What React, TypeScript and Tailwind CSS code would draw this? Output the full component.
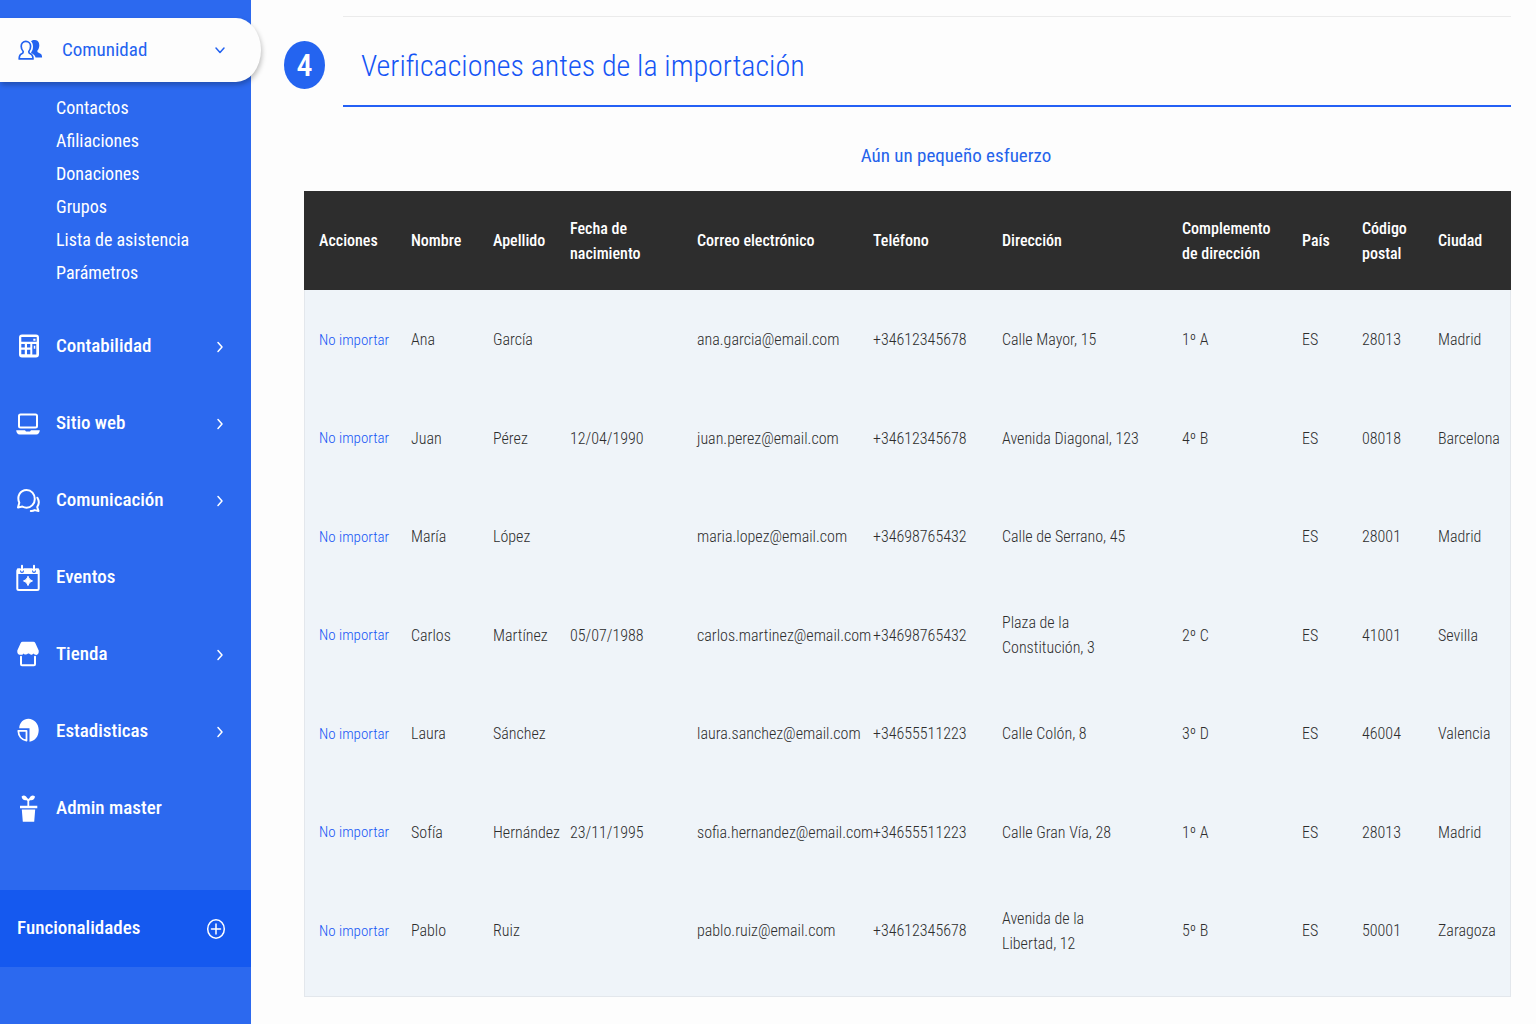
import { useState } from "react"
import type { ReactNode } from "react"

const subItems = [
  "Contactos",
  "Afiliaciones",
  "Donaciones",
  "Grupos",
  "Lista de asistencia",
  "Parámetros",
]

const columns = [
  { label: "Acciones", width: "w-[99px]" },
  { label: "Nombre", width: "w-[82px]" },
  { label: "Apellido", width: "w-[77px]" },
  { label: "Fecha de nacimiento", width: "w-[127px]" },
  { label: "Correo electrónico", width: "w-[176px]" },
  { label: "Teléfono", width: "w-[129px]" },
  { label: "Dirección", width: "w-[180px]" },
  { label: "Complemento de dirección", width: "w-[120px]" },
  { label: "País", width: "w-[60px]" },
  { label: "Código postal", width: "w-[76px]" },
  { label: "Ciudad", width: "w-[81px]" },
]

const contacts = [
  ["Ana", "García", "", "ana.garcia@email.com", "+34612345678", "Calle Mayor, 15", "1º A", "ES", "28013", "Madrid"],
  ["Juan", "Pérez", "12/04/1990", "juan.perez@email.com", "+34612345678", "Avenida Diagonal, 123", "4º B", "ES", "08018", "Barcelona"],
  ["María", "López", "", "maria.lopez@email.com", "+34698765432", "Calle de Serrano, 45", "", "ES", "28001", "Madrid"],
  ["Carlos", "Martínez", "05/07/1988", "carlos.martinez@email.com", "+34698765432", "Plaza de la Constitución, 3", "2º C", "ES", "41001", "Sevilla"],
  ["Laura", "Sánchez", "", "laura.sanchez@email.com", "+34655511223", "Calle Colón, 8", "3º D", "ES", "46004", "Valencia"],
  ["Sofía", "Hernández", "23/11/1995", "sofia.hernandez@email.com", "+34655511223", "Calle Gran Vía, 28", "1º A", "ES", "28013", "Madrid"],
  ["Pablo", "Ruiz", "", "pablo.ruiz@email.com", "+34612345678", "Avenida de la Libertad, 12", "5º B", "ES", "50001", "Zaragoza"],
]

function Icon({ children }: { children: ReactNode }) {
  return (
    <svg viewBox="0 0 28 28" className="size-7 shrink-0" fill="currentColor" aria-hidden="true">
      {children}
    </svg>
  )
}

const line = {
  fill: "none",
  stroke: "currentColor",
  strokeWidth: 2,
  strokeLinejoin: "round",
  strokeLinecap: "round",
} as const

function PeopleIcon() {
  return (
    <Icon>
      <path d="M15 5.200c1-.9 2.500-1.400 4-1.200 2.900.2 4.500 2.500 4.300 5.500-.1 2.200-.8 4-2 5.300 0 1.300.5 1.700 1.800 2.200 2.300.8 3 2 3 4.600h-6.500c-.6-2.300-1.900-3.400-4.100-4.300-.5-.2-.5-.6-.3-1.100 1.200-1.500 1.800-3.400 1.800-5.800 0-2-.7-3.900-2-5.200z" />
      <path
        {...line}
        strokeWidth={1.7}
        d="M9.800 5.400c-2.700 0-4.600 2-4.600 4.900 0 2.300.8 4 2 5.200.2 1.300-.3 1.800-1.400 2.200-2.100.8-2.600 2-2.600 5.200h13.800c0-3.200-.7-4.400-2.800-5.200-1.100-.4-1.600-.9-1.400-2.200 1.100-1.200 1.800-2.900 1.800-5.200 0-2.900-2.100-4.900-4.800-4.900z"
      />
    </Icon>
  )
}

function CalculatorIcon() {
  return (
    <Icon>
      <path
        fillRule="evenodd"
        d="M8 1.500h14a3 3 0 0 1 3 3v17a3 3 0 0 1-3 3H8a3 3 0 0 1-3-3v-17a3 3 0 0 1 3-3zM7.300 4v4.800h15.400V4zM7.300 11v3.500h3.500V11zM13 11v3.500h3.300V11zM7.300 16.800v4.500h3.500v-4.500zM13 16.800v4.500h3.300v-4.500zM18.300 11v10.500h4V11z"
      />
      <path d="M19.300 5.700h2.200v2h-2.200zM19.800 12.800h1.500v3h-1.500z" />
    </Icon>
  )
}

function LaptopIcon() {
  return (
    <Icon>
      <rect {...line} x="5" y="4.500" width="18" height="13" rx="1.500" />
      <path d="M2.200 20.300h8.800l1 1.300h4l1-1.300h8.800c-.2 2.600-1.400 4.200-3.500 4.200H5.700c-2.100 0-3.300-1.600-3.500-4.200z" />
    </Icon>
  )
}

function ChatIcon() {
  return (
    <Icon>
      <path {...line} d="M4 20.600l1.300-4.900c-2.700-6 .8-12.700 7.300-12.700 4.700 0 8.200 3.900 8.200 8.900s-3.700 8.800-8.200 8.800c-1.700 0-3-.4-4.300-1.200z" />
      <path {...line} d="M23.400 10.700c1.800 3 1.700 6.600-.2 9.300l1.300 4-3.900-.9c-1.200.8-2.500 1-3.800.9" />
    </Icon>
  )
}

function CalendarIcon() {
  return (
    <Icon>
      <rect {...line} x="3.300" y="5.500" width="21.400" height="20.500" rx="1.500" />
      <path d="M3 4.500h3V7a2 2 0 0 0 4 0V4.500h8V7a2 2 0 0 0 4 0V4.500h3V10H3z" />
      <path {...line} d="M8 1.800v5M20 1.800v5" />
      <path d="M14 12.200c.8 2.500 2 3.700 4.500 4.700-2.500 1-3.700 2.200-4.500 4.700-.8-2.500-2-3.700-4.500-4.700 2.500-1 3.700-2.200 4.500-4.700z" stroke="currentColor" />
    </Icon>
  )
}

function ShopIcon() {
  return (
    <Icon>
      <path d="M8.600.8h10.800c.9 0 1.500.4 1.900 1.200l3.400 7.500v1.500c0 2-1.600 3.200-3.300 2.800-1-.2-1.600-.8-2-1.400-1 1.500-3.200 1.700-4.400.2l-1-.1c-1.200 1.500-3.400 1.400-4.400-.1-.5.7-1.200 1.300-2.200 1.400-2 .3-4.100-.9-4.100-2.900V9.500L6.700 2c.4-.8 1-1.200 1.900-1.200z" />
      <path {...line} d="M7 15.800v7.500c0 .6.4 1 1 1h12c.6 0 1-.4 1-1v-7.500" />
    </Icon>
  )
}

function PieIcon() {
  return (
    <Icon>
      <path d="M5.200 10.200C5.600 4.500 9.500.8 14.400.8c5.700 0 10.300 5 10.300 11.200 0 6.500-3.900 11.200-9.200 11.700V10.200z" />
      <path {...line} strokeWidth={1.8} d="M12.500 12.800v9.800C7.800 22 4.500 18.200 4.300 12.800z" />
    </Icon>
  )
}

function PlantIcon() {
  return (
    <Icon>
      <path d="M7.600 1.500c2-1.700 4.500-.9 5.500 1.500l1.200.9L15.500 3c1-2.400 3.500-3.200 5.500-1.500-.2 2.800-2.300 4.300-5 3.700l-.8.8v4.800h-1.800V6l-.8-.8c-2.700.6-4.800-.9-5-3.700zM6 10.700h17.300v2.500H6zM7.800 14.500h13.400l-1 12.200H8.800z" />
    </Icon>
  )
}

const menu = [
  { label: "Contabilidad", icon: <CalculatorIcon />, arrow: true },
  { label: "Sitio web", icon: <LaptopIcon />, arrow: true },
  { label: "Comunicación", icon: <ChatIcon />, arrow: true },
  { label: "Eventos", icon: <CalendarIcon />, arrow: false },
  { label: "Tienda", icon: <ShopIcon />, arrow: true },
  { label: "Estadisticas", icon: <PieIcon />, arrow: true },
  { label: "Admin master", icon: <PlantIcon />, arrow: false },
]

function Sidebar() {
  const [open, setOpen] = useState(true)

  return (
    <aside className="w-[251px] shrink-0 bg-[#2c69ef] pt-[18px] text-[19px] text-white">
      <button
        onClick={() => setOpen(!open)}
        aria-expanded={open}
        className="flex h-16 w-[261px] items-center rounded-r-[25px_32px] bg-[#fdfdfd] pr-[34px] pl-4 text-left text-[#2362f0] shadow-[1px_3px_5px_rgba(0,0,0,0.25)]"
      >
        <PeopleIcon />
        <span className="ml-[18px] flex-1">Comunidad</span>
        <svg viewBox="0 0 14 14" className="size-3.5" {...line} strokeWidth={1.5} aria-hidden="true">
          <path d="M3 5l4 4.500L11 5" />
        </svg>
      </button>

      {open && (
        <ul className="pt-[9px] pb-[19px] text-lg">
          {subItems.map((item) => (
            <li key={item} className="h-[33px] pl-14 leading-[33px]">
              <a href="#">{item}</a>
            </li>
          ))}
        </ul>
      )}

      <nav className="font-medium">
        {menu.map((item) => (
          <a key={item.label} href="#" className="flex h-[77px] items-center pr-6 pl-3.5">
            {item.icon}
            <span className="ml-3.5 flex-1">{item.label}</span>
            {item.arrow && (
              <svg viewBox="0 0 14 14" className="size-3.5" {...line} strokeWidth={1.5} aria-hidden="true">
                <path d="M5 2.500l4 4.500-4 4.500" />
              </svg>
            )}
          </a>
        ))}
      </nav>

      <button className="mt-[43px] flex h-[77px] w-full items-center justify-between bg-[#1559ef] pr-6 pl-[17px] font-medium">
        Funcionalidades
        <svg viewBox="0 0 22 22" className="size-[22px]" {...line} strokeWidth={1.5} aria-hidden="true">
          <ellipse cx="11" cy="11" rx="8.300" ry="9.200" />
          <path d="M11 6v10M6.500 11h9" />
        </svg>
      </button>
    </aside>
  )
}

export default function App() {
  return (
    <div className="flex min-h-screen bg-[#fdfdfd] font-['Roboto_Condensed',Roboto,sans-serif]">
      <Sidebar />
      <main className="min-w-0 flex-1 pt-4 pr-[25px] pl-[33px]">
        <header className="flex items-center">
          <span className="mt-1.5 flex h-12 w-[41px] items-center justify-center rounded-[50%] bg-[#2464f0] text-[32px] font-medium text-white">
            4
          </span>
          <h1 className="ml-[18px] flex h-[91px] flex-1 items-center border-t border-b-2 border-t-[#ebebeb] border-b-[#2460f5] pt-2 pl-[18px] text-[30px] font-light text-[#1555f5]">
            Verificaciones antes de la importación
          </h1>
        </header>

        <p className="mt-[37px] pl-[117px] text-center text-[19px] leading-6 text-[#2563eb]">Aún un pequeño esfuerzo</p>

        <div className="mt-[23px] ml-5 bg-[#eff4f9] pb-[17px] shadow-[inset_0_0_0_1px_#e3e7ec]">
          <table className="w-full table-fixed text-left text-base leading-[25px] text-[#2d2d2d]">
            <thead className="bg-[#2d2d2d] text-white">
              <tr className="h-[99px]">
                {columns.map((col) => (
                  <th key={col.label} className={`${col.width} pr-2 pl-2 font-medium first:pl-[15px]`}>
                    {col.label}
                  </th>
                ))}
              </tr>
            </thead>
            <tbody className="font-light">
              {contacts.map((row) => (
                <tr key={row[3]} className="odd:h-[99px] even:h-[98px]">
                  <td className="pl-[15px]">
                    <button className="text-[15px] whitespace-nowrap text-[#1555f5]">No importar</button>
                  </td>
                  {row.map((value, i) => (
                    <td key={i} className={i === 5 ? "pr-6 pl-2 text-balance" : "pl-2"}>
                      {value}
                    </td>
                  ))}
                </tr>
              ))}
            </tbody>
          </table>
        </div>
      </main>
    </div>
  )
}
